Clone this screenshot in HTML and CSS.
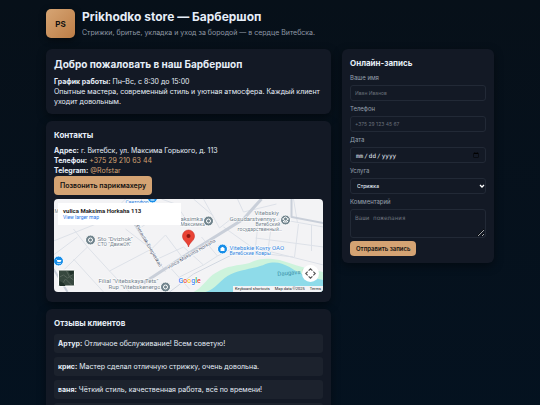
FILE: index.html
```html
<!DOCTYPE html>
<html lang="ru">

<head>
  <meta charset="UTF-8" />
  <meta name="viewport" content="width=device-width, initial-scale=1.0" />
  <title>Prikhodko store — Барбершоп</title>
  <link rel="stylesheet" href="styles.css">
</head>

<body>
  <div class="container">
    <header class="header">
      <div class="logo">PS</div>
      <div>
        <h1>Prikhodko store — Барбершоп</h1>
        <p class="lead">Стрижки, бритье, укладка и уход за бородой — в сердце Витебска.</p>
      </div>
    </header>

    <div class="grid">
      <main class="column">
        <section class="card">
          <h2>Добро пожаловать в наш Барбершоп</h2>
          <p><strong>График работы:</strong> Пн–Вс, с 8:30 до 15:00</p>
          <p>Опытные мастера, современный стиль и уютная атмосфера. Каждый клиент уходит довольным.</p>
        </section>

        <section class="card">
          <h3>Контакты</h3>
          <p><strong>Адрес:</strong> г. Витебск, ул. Максима Горького, д. 113</p>
          <p><strong>Телефон:</strong> <a href="tel:+375292106344">+375 29 210 63 44</a></p>
          <p><strong>Telegram:</strong> <a href="#">@Rofstar</a></p>
          <button class="btn call-btn" type="button">Позвонить парикмахеру</button>

          <!-- Map -->
          <div class="map">
            <svg class="map-canvas" viewBox="0 0 270 93" preserveAspectRatio="xMidYMid slice">
              <rect width="270" height="93" fill="#f3f3f5" />
              <path d="M140 93C150 88 154 78 162 74C174 66 184 67 196 64C206 59 214 59 226 61C242 66 254 70 270 73V93Z" fill="#cdf3dc" />
              <path d="M152 93C162 90 166 82 174 77C186 70 202 70 212 65C222 62 228 64 236 68C248 76 258 79 270 81V93Z" fill="#8edbe9" />
              <g fill="none" stroke="#dde1e8" stroke-width="1">
                <path d="M0 42L50 22L72 0M6 75L34 48L20 30M34 48L56 72L98 50L72 30M56 72L76 93M20 60L50 93M98 50L112 73M0 56L24 38M88 28L122 5L136 25M122 5L108 0M150 0L166 29L180 18M140 0L160 17M104 60L130 48L150 66L164 57L148 38M126 78L150 66M118 70L136 90M164 57L178 50M205 20L202 48L216 55M218 25L214 55L240 58M245 25L241 58M202 39L270 48M258 26V52M170 28L198 48L270 66M130 60L112 36L98 50M184 0L190 13L223 5M225 20L270 28M240 0L244 24" />
              </g>
              <g fill="none" stroke="#c9cfd9" stroke-width="2">
                <path d="M79 22L107 66" />
                <path d="M90 84L134 55L190 20L208 0" stroke-width="3" />
                <path d="M0 70L14 93" />
                <path d="M238 0V18L270 24" />
              </g>
              <path d="M116 93L140 75L184 53" fill="none" stroke="#d2d8e1" />

              <g class="map-label">
                <text x="72" y="5" class="blue">Светофор</text>
                <text x="1" y="14">M</text>
                <text x="44" y="42" class="place">Sto "Dvizhok"</text>
                <text x="44" y="47">СТО "ДвижОК"</text>
                <text x="127" y="22" class="place">aksimka</text>
                <text x="127" y="27">Максимка</text>
                <text x="201" y="16" class="place">Vitebskiy</text>
                <text x="176" y="22" class="place">Gosudarstvennyy…</text>
                <text x="202" y="27">Витебский</text>
                <text x="184" y="32">государственный…</text>
                <text x="176" y="51" class="place blue">Vitebskie Kovry OAO</text>
                <text x="176" y="56" class="blue">Витебские Ковры</text>
                <text x="45" y="84" class="place">Filial "Vitebskaya Tets"</text>
                <text x="55" y="90" class="place">Rup "Vitebskenergo</text>
                <text x="224" y="77" class="river" transform="rotate(-5 224 77)">Daugava Д</text>
                <text x="115" y="70" class="road" transform="rotate(-30 115 70)">vulica Maksima Horkaha</text>
                <text x="82" y="27" class="road" transform="rotate(60 82 27)">Pieraulak Enegietikaŭ</text>
              </g>

              <g stroke="#fff" stroke-width="1">
                <circle cx="37" cy="41" r="5" fill="#71848d" />
                <circle cx="155" cy="22" r="5" fill="#71848d" />
                <circle cx="232" cy="21" r="5" fill="#71848d" />
                <circle cx="112" cy="88" r="5" fill="#71848d" />
                <circle cx="99" cy="-1" r="5" fill="#188ee8" />
                <circle cx="5" cy="62" r="5" fill="#188ee8" />
                <circle cx="169" cy="50" r="5" fill="#188ee8" />
              </g>
              <g fill="none" stroke="#fff">
                <circle cx="37" cy="41" r="2" />
                <circle cx="155" cy="22" r="2" />
                <circle cx="112" cy="88" r="2" />
                <path d="M229 20L232 18L235 20L232 22ZM230 22V23H234V22M97 1H101" />
              </g>
              <path d="M2 60H3L4 63H7L8 61H4M4 64H5V65H4ZM6 64H7V65H6Z" fill="#fff" />
              <path d="M167 49H171V52H167ZM168 49V48H170V49" fill="#fff" />
              <path d="M135 48C134 43 129 42 129 37A6 6 0 0 1 141 37C141 42 136 43 135 48Z" fill="#e94335" stroke="#c5221f" stroke-width=".5" />
              <circle cx="135" cy="37" r="2" fill="#8c1712" />

              <rect x="5" y="71" width="16" height="16" rx="1" fill="#37483f" stroke="#fff" />
              <path d="M6 78L10 76L14 79L20 75M8 86L12 80L18 86M13 72L16 78L20 81" fill="none" stroke="#55635a" />
              <path d="M6 82L10 84L12 87H6ZM15 72H20V75L17 76Z" fill="#1f3029" />

              <text x="125" y="84" class="google"><tspan fill="#4285f4">G</tspan><tspan fill="#ea4335">o</tspan><tspan fill="#fbbc05">o</tspan><tspan fill="#4285f4">g</tspan><tspan fill="#34a853">l</tspan><tspan fill="#ea4335">e</tspan></text>
            </svg>
            <div class="map-info">
              <b>vulica Maksima Horkaha 113</b>
              <a href="#">View larger map</a>
            </div>
            <button class="map-move" type="button" aria-label="Map camera controls">
              <svg viewBox="0 0 18 18" fill="none" stroke="#555" stroke-width="1.2">
                <path d="M7 6L9 4L11 6M7 12L9 14L11 12M6 7L4 9L6 11M12 7L14 9L12 11" />
              </svg>
            </button>
            <div class="map-footer">
              <button type="button">Keyboard shortcuts</button>
              <span>Map data ©2025</span>
              <a href="#">Terms</a>
            </div>
          </div>
        </section>

        <section class="card">
          <h3>Отзывы клиентов</h3>
          <div class="reviews">
            <div class="review"><strong>Артур:</strong> Отличное обслуживание! Всем советую!</div>
            <div class="review"><strong>крис:</strong> Мастер сделал отличную стрижку, очень довольна.</div>
            <div class="review"><strong>ваня:</strong> Чёткий стиль, качественная работа, всё по времени!</div>
            <div class="review">&nbsp;</div>
          </div>
        </section>
      </main>

      <aside class="card">
        <h3>Онлайн-запись</h3>
        <form>
          <label for="name">Ваше имя</label>
          <input type="text" id="name" placeholder="Иван Иванов">
          <label for="phone">Телефон</label>
          <input type="tel" id="phone" placeholder="+375 29 123 45 67">
          <label for="date">Дата</label>
          <input type="date" id="date">
          <label for="service">Услуга</label>
          <div class="select-wrap">
            <select id="service">
              <option>Стрижка</option>
            </select>
            <svg class="chevron" viewBox="0 0 6 4" fill="none" stroke="#fff" stroke-width="1.3">
              <path d="M1 1L3 3L5 1" />
            </svg>
          </div>
          <label for="comment">Комментарий</label>
          <textarea id="comment" placeholder="Ваши пожелания"></textarea>
          <button class="btn submit-btn" type="submit">Отправить запись</button>
        </form>
      </aside>
    </div>
  </div>
</body>

</html>
```

FILE: styles.css
```css
* {
  margin: 0;
  padding: 0;
  box-sizing: border-box;
}

html {
  scrollbar-width: none;
}

body {
  min-height: 100vh;
  font-family: Inter, sans-serif;
  font-size: 7px;
  line-height: 10px;
  color: #e6eef8;
  background: linear-gradient(180deg, #071019, #041220);
}

.container {
  max-width: 464px;
  margin: 0 auto;
  padding: 9px 8px;
}

.header {
  display: flex;
  align-items: center;
  gap: 7px;
  margin-bottom: 11px;
}

.logo {
  width: 29px;
  height: 29px;
  display: flex;
  align-items: center;
  justify-content: center;
  border-radius: 5px;
  background: linear-gradient(135deg, #d6a574, #bd7d46);
  box-shadow: 0 2px 6px rgba(0, 0, 0, 0.5);
  color: #111;
  font-size: 8px;
  font-weight: 700;
}

h1 {
  font-size: 12px;
  line-height: 16px;
}

.lead {
  margin-top: 3px;
  color: #8f98a5;
}

.grid {
  display: grid;
  grid-template-columns: minmax(0, 1fr) 152px;
  gap: 11px;
  align-items: start;
}

.column {
  display: flex;
  flex-direction: column;
  gap: 7px;
}

.card {
  padding: 8px 8px 7px;
  border-radius: 6px;
  background: #131925;
  box-shadow: 0 3px 10px rgba(0, 0, 0, 0.4);
}

h2 {
  font-size: 10px;
  line-height: 14px;
  margin-bottom: 6px;
}

h3 {
  font-size: 8px;
  line-height: 12px;
  margin-bottom: 5px;
}

a {
  color: #d4a373;
  text-decoration: none;
}

.btn {
  display: block;
  border: none;
  border-radius: 4px;
  background: #d4a373;
  color: #111;
  font-family: Inter, sans-serif;
  font-weight: 600;
  cursor: pointer;
}

.call-btn {
  height: 19px;
  padding: 0 6px;
  font-size: 7px;
}

/* Map */
.map {
  position: relative;
  height: 93px;
  margin: 4px 0 3px;
  border-radius: 4px;
  overflow: hidden;
  font-family: Roboto, sans-serif;
  color: #222;
}

.map-canvas {
  display: block;
  width: 100%;
  height: 100%;
}

.map-label {
  font-size: 5px;
  fill: #71808b;
  stroke: #fff;
  stroke-width: 1px;
  paint-order: stroke;
}

.map-label .place {
  font-size: 6px;
}

.map-label .blue {
  fill: #2e83dc;
}

.map-label .road {
  fill: #596579;
}

.map-label .river {
  font-size: 6px;
  fill: #3b91a7;
  stroke: none;
}

.google {
  font-size: 7px;
  font-weight: 500;
  stroke: #fff;
  stroke-width: 1px;
  paint-order: stroke;
}

.map-info {
  position: absolute;
  top: 4px;
  left: 4px;
  width: 123px;
  height: 22px;
  padding: 4px 5px;
  background: #fff;
  font-size: 5px;
  line-height: 7px;
}

.map-info b {
  display: block;
  font-size: 6px;
  font-weight: 700;
}

.map-info a {
  display: block;
  color: #1a73e8;
}

.map-move {
  position: absolute;
  right: 4px;
  bottom: 10px;
  width: 17px;
  height: 17px;
  border: none;
  border-radius: 50%;
  background: #fff;
}

.map-move svg {
  display: block;
}

.map-footer {
  position: absolute;
  right: 0;
  bottom: 0;
  display: flex;
  gap: 5px;
  padding: 0 2px;
  background: #f3f3f5;
  font-size: 4px;
  line-height: 6px;
}

.map-footer button {
  border: none;
  background: none;
  font: inherit;
  color: inherit;
}

.map-footer a {
  color: inherit;
}

/* Reviews */
.reviews {
  display: flex;
  flex-direction: column;
  gap: 4px;
}

.review {
  padding: 5px 4px 4px;
  border-radius: 3px;
  background: #1c222d;
}

/* Form */
label {
  display: block;
  margin-bottom: 3px;
  font-size: 6px;
  line-height: 8px;
  color: #98a1ae;
}

input,
select,
textarea {
  display: block;
  width: 100%;
  height: 16px;
  margin-bottom: 4px;
  padding: 0 4px;
  border: 1px solid #222936;
  border-radius: 3px;
  background: #131925;
  color: #e6eef8;
  font-family: Inter, sans-serif;
  font-size: 5px;
}

input[type="date"] {
  font-family: "DejaVu Sans Mono", monospace;
  font-size: 6px;
}

.select-wrap {
  position: relative;
}

select {
  appearance: none;
  padding: 0 6px;
  font-weight: 500;
}

.chevron {
  position: absolute;
  top: 6px;
  right: 1px;
  width: 6px;
  height: 4px;
  pointer-events: none;
}

textarea {
  height: 29px;
  margin-bottom: 3px;
  padding: 4px;
  font-family: "DejaVu Sans Mono", monospace;
  font-size: 6px;
  resize: vertical;
}

::placeholder {
  color: #696f79;
}

.submit-btn {
  height: 15px;
  padding: 0 6px;
  font-size: 6px;
}
```
